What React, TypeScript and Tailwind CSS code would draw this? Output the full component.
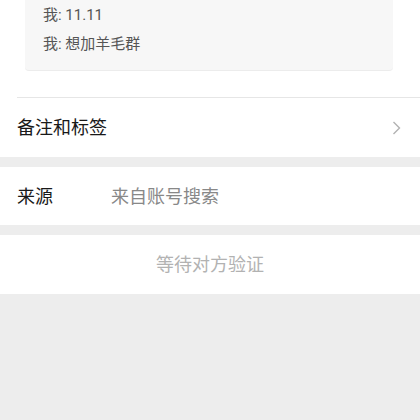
export default function App() {
  const font = { fontFamily: 'Roboto, "Noto Sans CJK SC", sans-serif' };

  return (
    <div className="w-[420px] h-[420px] bg-[#ededed] overflow-hidden" style={font}>
      {/* message preview */}
      <div className="bg-white pb-[26px]">
        <div className="ml-[25px] w-[368px] bg-[#f7f7f7] rounded-b-[4px] border-b border-[#ececec] pl-[18px] pb-[12px] text-[15px] text-[#555555]">
          <div className="h-[29px] leading-[29px] pt-px">我: 11.11</div>
          <div className="h-[29px] leading-[29px] pt-px">我: 想加羊毛群</div>
        </div>
      </div>

      {/* remark row */}
      <div className="bg-white">
        <div className="ml-[17px] h-px bg-[#e6e6e6]" />
        <div className="flex items-center justify-between h-[59px] pl-[17px] pr-[19px]">
          <span className="text-[18px] text-[#191919]">备注和标签</span>
          <svg width="9" height="14" viewBox="0 0 9 14" fill="none">
            <polyline points="1.5,1 7.5,7 1.5,13" stroke="#b2b2b2" strokeWidth="1.4" />
          </svg>
        </div>
      </div>

      {/* source row */}
      <div className="mt-[10px] bg-white h-[58px] flex items-center pl-[17px]">
        <span className="w-[94px] text-[18px] text-[#191919]">来源</span>
        <span className="text-[18px] text-[#888888]">来自账号搜索</span>
      </div>

      {/* pending */}
      <div className="mt-[10px] bg-white h-[59px] flex items-center justify-center">
        <span className="text-[18px] text-[#b2b2b2]">等待对方验证</span>
      </div>
    </div>
  );
}
